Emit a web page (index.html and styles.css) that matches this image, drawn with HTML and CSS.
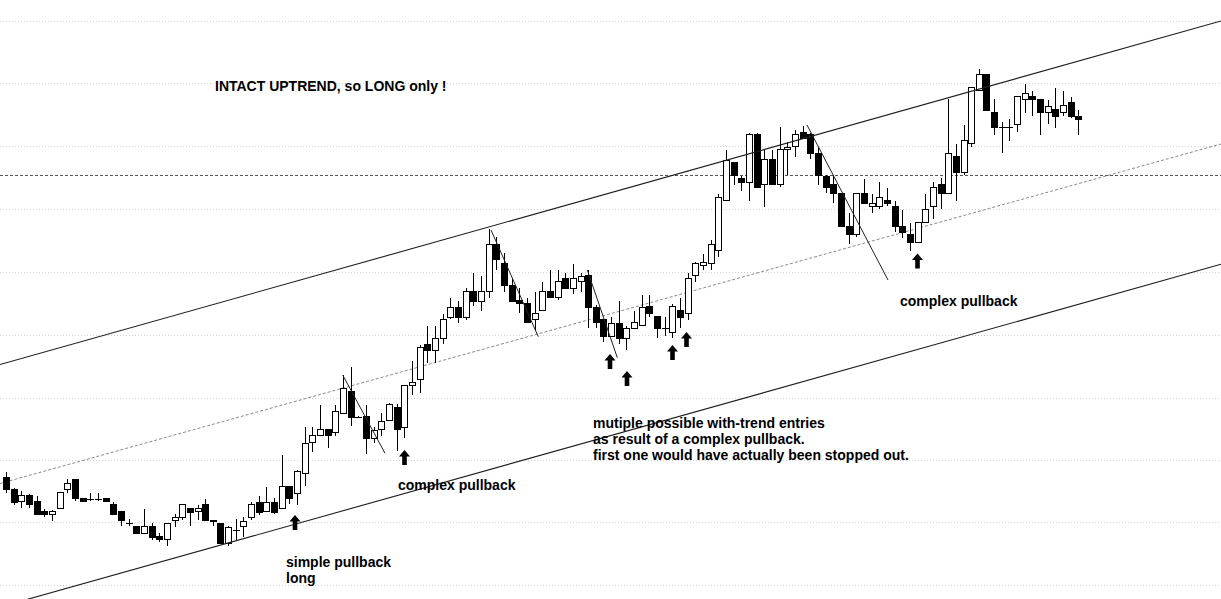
FILE: index.html
```html
<!DOCTYPE html>
<html lang="en">
<head>
<meta charset="utf-8">
<title>Intact uptrend chart</title>
<link rel="stylesheet" href="styles.css">
</head>
<body>
<div class="chart">
  <svg class="canvas" width="1221" height="599" viewBox="0 0 1221 599" xmlns="http://www.w3.org/2000/svg">
    <g id="grid" class="grid"></g>
    <line class="hdash" x1="0" y1="175.5" x2="1221" y2="175.5"/>
    <line class="middash" x1="0" y1="483.5" x2="1221" y2="144"/>
    <g id="candles"></g>
    <line class="channel" x1="0" y1="364.5" x2="1221" y2="21"/>
    <line class="channel" x1="25" y1="600" x2="1221" y2="264.3"/>
    <line class="trend" x1="342.7" y1="375" x2="385" y2="453.3"/>
    <line class="trend" x1="491" y1="230" x2="538.3" y2="336.7"/>
    <line class="trend" x1="587.3" y1="270" x2="617.3" y2="357.7"/>
    <line class="trend" x1="807" y1="125" x2="888" y2="280"/>
    <g id="arrows" class="arrows"></g>
  </svg>
  <div class="label label-intact">INTACT UPTREND, so LONG only !</div>
  <div class="label label-complex1">complex pullback</div>
  <div class="label label-simple">simple pullback<br>long</div>
  <div class="label label-multi">mutiple possible with-trend entries<br>as result of a complex pullback.<br>first one would have actually been stopped out.</div>
  <div class="label label-complex2">complex pullback</div>
</div>
<script src="script.js"></script>
</body>
</html>
```

FILE: styles.css
```css
html, body {
  margin: 0;
  padding: 0;
  background: #ffffff;
}

.chart {
  position: relative;
  width: 1221px;
  height: 599px;
  overflow: hidden;
  background: #ffffff;
  font-family: "Liberation Sans", Arial, sans-serif;
}

.canvas {
  position: absolute;
  left: 0;
  top: 0;
  display: block;
}

.grid line {
  stroke: #d4d4d4;
  stroke-width: 1;
  stroke-dasharray: 1 2;
}

.hdash {
  stroke: #555555;
  stroke-width: 1;
  stroke-dasharray: 3 2;
}

.middash {
  stroke: #8a8a8a;
  stroke-width: 1;
  stroke-dasharray: 3 2;
}

.channel {
  stroke: #1e1e1e;
  stroke-width: 1.1;
}

.trend {
  stroke: #222222;
  stroke-width: 1;
}

.wick {
  stroke: #000000;
  stroke-width: 1;
}

.body-up {
  fill: #ffffff;
  stroke: #000000;
  stroke-width: 1;
}

.body-down {
  fill: #000000;
  stroke: #000000;
  stroke-width: 1;
}

.arrows path {
  fill: #000000;
}

.label {
  position: absolute;
  font-family: "Liberation Sans", Arial, sans-serif;
  font-weight: bold;
  font-size: 14px;
  line-height: 16px;
  color: #000000;
  white-space: nowrap;
}

.label-intact { left: 215px; top: 78px; }
.label-complex1 { left: 398px; top: 477px; }
.label-simple { left: 286px; top: 554px; }
.label-multi { left: 593px; top: 415px; }
.label-complex2 { left: 900px; top: 293px; }
```

FILE: script.js
```js
(function () {
  var NS = "http://www.w3.org/2000/svg";
  var D = [
    ['B',476.7,489.3,471.7,492.7],['B',489.3,501.7,488,505],['W',495,501,490.7,508.3],['B',495,504.3,494,508],
    ['B',501,514,496,514],['B',511,514,509.3,517.3],['W',511,514,510,520.7],['W',492.3,508.3,492,508.3],
    ['W',482.7,489,479.3,493],['B',479.3,498.3,479,501],
    ['B',498.3,501,498,501],['D',499.3,499.3,493,501],['D',499.3,499.3,493,501],['B',498.3,501,498,501],
    ['B',504.3,514,502,514],['B',511,520,511,526],['D',522.7,522.7,519,526],['B',526,533.3,526,533.3],
    ['W',526,533.3,509.3,533.3],['B',526,536.7,523.3,540],
    ['B',536,539.3,533.3,541.7],['W',523.3,539.3,523,546],['W',517.3,520,514,526.7],['W',504.3,517.3,504,520],
    ['B',508.3,511.7,508,526],['W',508.3,511,505,520],['B',504.3,520,499.3,520],['B',520,521,520,526],
    ['B',523.3,542.7,523,542.7],['W',526.7,542.7,526,546],
    ['D',530,530,519.3,540],['W',520.7,526,517.3,536.7],['W',504.3,517.3,501.7,520],['B',501.7,511.7,496,515],
    ['W',501.7,511,487.3,511],['B',501.7,511.7,498.3,514],['W',486,508.3,455,508.3],['B',486,498.3,486,504.3],
    ['W',470.7,492.7,470,505],['W',442.7,473.3,426.7,486],
    ['W',435.3,442.3,426.7,451.7],['W',429.3,435,405,435],['B',429.3,435,429,448],['W',410.7,432.3,405,436],
    ['W',388.3,413.3,375,413.3],['B',390.7,416.7,366.7,426],['D',416.7,416.7,416,418],['B',416,438.3,405,454],
    ['W',430,438.3,426.7,443],['W',420.7,429,413.3,436],
    ['W',404,420,403,420],['B',407.3,429.3,404,450.7],['W',385,426.7,385,438.3],['W',382.3,385,360.7,395],
    ['W',347.3,379.3,345,393],['B',344.3,350,326,363.3],['W',338.3,350,326,363],['W',319.3,338.3,314,344],
    ['W',306.7,316.7,298.3,319.3],['B',306.7,316.7,300.7,322.7],
    ['W',291,316.7,288.3,320],['B',291,301,273.3,306],['W',291,301,276,310.7],['W',244.3,291,229.3,298.3],
    ['B',244.3,259.3,236.7,270],['B',263.3,285,253,292],['B',285,300.7,278.3,300.7],['B',300,303.3,288.3,313.3],
    ['B',303.3,322.3,298,322.3],['W',313.3,319.3,291.7,330],
    ['W',291,310,281.7,310],['B',291,297.3,270,297.3],['W',281,297.3,270,300],['B',278.3,288.3,273.3,288.3],
    ['W',278.3,288.3,264.3,294.3],['W',275.7,281,273.3,291.7],['B',275,306.7,270,328.3],['B',306.7,322.3,305,328.3],
    ['B',319,335.7,319,341.7],['W',322.7,335.7,316.7,335.7],
    ['B',322.7,338.3,301,344.3],['W',328.3,338.3,325.7,350],['W',322.3,327.7,311,327.7],['W',306.7,325,295,325],
    ['B',305.7,313.3,295,316.7],['B',316,328.3,316,338.3],['D',327.7,327.7,316.7,335.7],['W',306,332.3,304,338.3],
    ['B',310,316.7,298.3,328.3],['W',278.3,313.3,273.3,320],
    ['W',263.3,275,262,281.7],['W',262,264.5,254,270],['W',244.3,263.3,240,270],['W',197.3,250,194,256.7],
    ['W',160,200,150,200],['B',162.3,175,162,185],['B',178.3,181.7,176,190.7],['W',134.3,181.7,132.7,200.7],
    ['B',134.3,187.3,133.3,187.3],['W',159.3,184.3,150,206.7],
    ['B',159.3,184.3,150,184.3],['W',149.3,184.3,127.3,187.3],['W',146.7,149.3,141.7,175],['W',134.3,146,130,156.7],
    ['B',131.7,137.7,125.7,137.7],['B',134.3,153.3,133,159.3],['B',153.3,175,146.7,185],['B',176,187.3,175,193.3],
    ['B',184.3,193.3,175,203.3],['B',193.3,225.7,193.3,225.7],
    ['B',225.7,234.3,213.3,244.3],['W',193.3,234.3,193.3,237.3],['B',193.3,203.3,179,203.3],['W',203.3,206,194.3,212.7],
    ['W',197.3,206,182.3,209],['B',200,203.3,188.3,206],['B',206,225.7,200.7,231.7],['B',225.7,231.7,210,238],
    ['B',234,241.7,223.3,250.7],['W',222.3,241.7,222.3,242.7],
    ['W',209.3,222.3,194,222.3],['W',187.3,206,181.7,219.3],['B',184.3,193.3,178.3,209.3],['W',153.3,193.3,99.3,193.3],
    ['B',156,171.7,144,200.7],['W',140,171.7,125,175],['W',87.3,143.3,87.3,146.7],['W',74.3,90,69.3,90],
    ['B',74.3,110,74,110],['B',111.7,127.3,99.3,135],
    ['D',127.3,127.3,121.7,153.3],['D',127.3,127.3,119.3,140.7],['W',96,124.3,96,131.7],['W',93.3,99,84,112.7],
    ['B',96,99.3,91,115.7],['B',99.3,112.3,99.3,135],['W',105.7,112.3,100,124.3],['B',109.3,115.7,88.3,127.7],
    ['W',105,112.3,91,115.7],['B',102.3,115.7,97.3,118.3],
    ['B',115.7,119,110,135]
  ];

  function el(name, attrs, parent) {
    var e = document.createElementNS(NS, name);
    for (var k in attrs) e.setAttribute(k, attrs[k]);
    parent.appendChild(e);
    return e;
  }

  var grid = document.getElementById("grid");
  var gy = [21.5, 83.5, 146.5, 209.5, 272.5, 335.5, 398.5, 460.5, 522.5, 585.5];
  gy.forEach(function (y) {
    el("line", { x1: 0, y1: y, x2: 1221, y2: y }, grid);
  });

  var g = document.getElementById("candles");
  D.forEach(function (c, i) {
    var cx = Math.round(6 + 7.66 * i);
    var wx = cx + 0.5;
    var wt = Math.round(c[3]), wb = Math.round(c[4]);
    if (wb > wt) el("line", { "class": "wick", x1: wx, y1: wt, x2: wx, y2: wb }, g);
    if (c[0] === 'D') {
      var y = Math.round(c[1]) + 0.5;
      el("line", { "class": "wick", x1: cx - 3, y1: y, x2: cx + 4, y2: y }, g);
      return;
    }
    var bt = Math.round(c[1]), bb = Math.round(c[2]);
    var h = Math.max(bb - bt, 1);
    el("rect", {
      "class": c[0] === 'W' ? "body-up" : "body-down",
      x: cx - 2.5, y: bt + 0.5, width: 6, height: h
    }, g);
  });

  var arrows = document.getElementById("arrows");
  var A = [[295, 515], [404.5, 450], [610, 354], [627, 371], [672.5, 345], [686.5, 332], [917.5, 253.5]];
  A.forEach(function (a) {
    var x = a[0], t = a[1];
    var d = "M" + (x - 5.5) + " " + (t + 6.5) + " L" + x + " " + t + " L" + (x + 5.5) + " " + (t + 6.5) +
      " H" + (x + 2.3) + " V" + (t + 15) + " H" + (x - 2.3) + " V" + (t + 6.5) + " Z";
    el("path", { d: d }, arrows);
  });
})();
```
